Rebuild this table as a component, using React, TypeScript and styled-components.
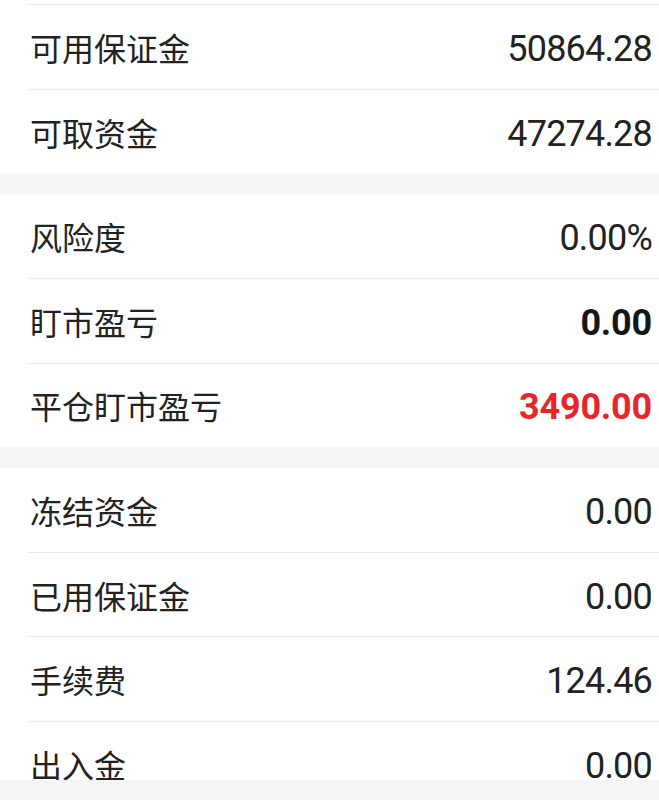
import React from "react";
import styled, { createGlobalStyle } from "styled-components";

const Global = createGlobalStyle`
  html, body { margin: 0; padding: 0; background: #f5f5f5; }
  body { font-family: "Noto Sans CJK SC", "Noto Sans", sans-serif; overflow: hidden; }
`;

const Page = styled.div`
  display: flex;
  flex-direction: column;
  gap: 21.3px;
  background: #f5f5f5;
  min-height: 800px;
`;

const Section = styled.section`
  background: #fff;
`;

const Tail = styled.div`
  height: 4.33px;
  margin-left: 28px;
  border-bottom: 1px solid #ececec;
`;

const Row = styled.div`
  height: 83.5px;
  margin-left: 28px;
  padding-right: 7px;
  display: flex;
  align-items: center;
  justify-content: space-between;
  border-bottom: 1px solid #ececec;
  &:last-child { border-bottom: none; }
`;

const Label = styled.span`
  padding-left: 2px;
  font-family: "Noto Sans CJK SC", sans-serif;
  font-size: 32px;
  color: #222222;
  line-height: 1;
`;

type Tone = "normal" | "strong" | "red";

const Value = styled.span<{ $tone: Tone }>`
  margin-top: 4px;
  font-family: Roboto, "Liberation Sans", sans-serif;
  font-size: 36px;
  line-height: 1;
  letter-spacing: ${(p) => (p.$tone === "normal" ? "-0.8px" : "-0.2px")};
  font-weight: ${(p) => (p.$tone === "normal" ? 400 : 700)};
  color: ${(p) => (p.$tone === "red" ? "#e8262a" : p.$tone === "strong" ? "#161616" : "#222222")};
`;

const BottomBar = styled.div`
  position: fixed;
  left: 0;
  right: 0;
  bottom: 0;
  height: 20px;
  background: #f5f5f5;
`;

type Item = { label: string; value: string; tone?: Tone };

const sections: Item[][] = [
  [
    { label: "可用保证金", value: "50864.28" },
    { label: "可取资金", value: "47274.28" },
  ],
  [
    { label: "风险度", value: "0.00%" },
    { label: "盯市盈亏", value: "0.00", tone: "strong" },
    { label: "平仓盯市盈亏", value: "3490.00", tone: "red" },
  ],
  [
    { label: "冻结资金", value: "0.00" },
    { label: "已用保证金", value: "0.00" },
    { label: "手续费", value: "124.46" },
    { label: "出入金", value: "0.00" },
  ],
];

export default function App() {
  return (
    <>
      <Global />
      <Page>
        {sections.map((items, i) => (
          <Section key={i}>
            {i === 0 && <Tail />}
            {items.map((it) => (
              <Row key={it.label}>
                <Label>{it.label}</Label>
                <Value $tone={it.tone ?? "normal"}>{it.value}</Value>
              </Row>
            ))}
          </Section>
        ))}
      </Page>
      <BottomBar />
    </>
  );
}
